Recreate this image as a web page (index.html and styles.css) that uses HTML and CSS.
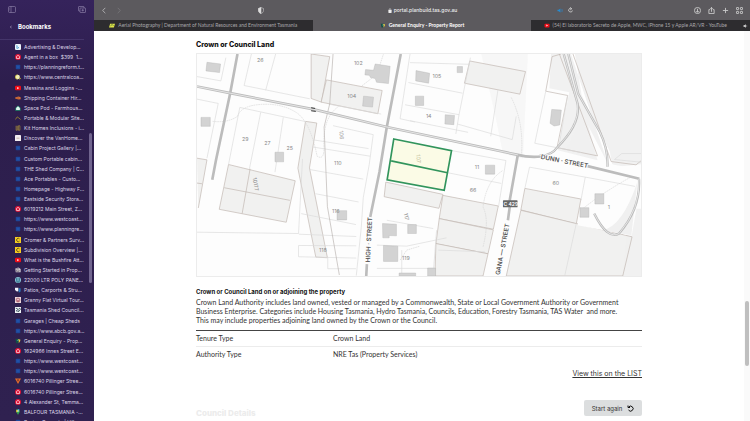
FILE: index.html
```html
<!DOCTYPE html>
<html lang="en">
<head>
<meta charset="utf-8">
<title>General Enquiry - Property Report</title>
<link rel="stylesheet" href="styles.css">
</head>
<body>
<svg width="0" height="0" class="defs" aria-hidden="true">
  <symbol id="cube" viewBox="0 0 16 16"><rect x="2" y="2" width="12" height="12" rx="2" fill="#1d4596"/><path d="M4 6h8M4 10h8" stroke="#2c62bd" stroke-width="1.5"/></symbol>
  <symbol id="red" viewBox="0 0 16 16"><circle cx="8" cy="8" r="8" fill="#e01438"/><path d="M8 3.5l4 3v5.5H4V6.500z" fill="none" stroke="#ffd9e0" stroke-width="2"/></symbol>
  <symbol id="yt" viewBox="0 0 16 16"><rect y="2" width="16" height="12" rx="3" fill="#f00d18"/><path d="M6 5l5 3-5 3z" fill="#fff"/></symbol>
  <symbol id="adv" viewBox="0 0 16 16"><rect width="16" height="16" rx="3" fill="#eef6fc"/><path d="M5 3v9l5-2-3-3" fill="none" stroke="#3a94cf" stroke-width="2"/></symbol>
  <symbol id="coast" viewBox="0 0 16 16"><circle cx="7" cy="8" r="6" fill="#f2efb8"/><path d="M7 2a6 6 0 0 0 0 12M12 9l3 3-4 2" fill="none" stroke="#d8c83c" stroke-width="2"/></symbol>
  <symbol id="ship" viewBox="0 0 16 16"><path d="M1 6l9-2 5 2v5l-5 1-9-2z" fill="#d5703a"/><path d="M3 8h8" stroke="#70321f"/></symbol>
  <symbol id="pod" viewBox="0 0 16 16"><path d="M8 1l7 7v7H1V8z" fill="#1e8b68"/><path d="M8 3l5 5v5H3V8z" fill="#dff4ee"/></symbol>
  <symbol id="roof" viewBox="0 0 16 16"><path d="M1 12l5-7 3 2 6 5" fill="none" stroke="#a58d2d" stroke-width="2"/></symbol>
  <symbol id="kit" viewBox="0 0 16 16"><path d="M3 2v12h3V2M9 2h4v12H9z" fill="none" stroke="#a18a3b" stroke-width="2"/></symbol>
  <symbol id="van" viewBox="0 0 16 16"><rect width="16" height="16" rx="1" fill="#f3edf0"/><path d="M4 7h8v3H4z" fill="#c9b8ad"/></symbol>
  <symbol id="c" viewBox="0 0 16 16"><rect width="16" height="16" fill="#f5cd22"/><path d="M12 5a4.500 4.500 0 1 0 0 6" fill="none" stroke="#423719" stroke-width="2"/></symbol>
  <symbol id="prop" viewBox="0 0 16 16"><path d="M1 4l8-3 6 4v9H2z" fill="#d9d4dc"/><path d="M4 8h7v4H4zM3 5l8-2" fill="none" stroke="#5d5562" stroke-width="1.500"/></symbol>
  <symbol id="poly" viewBox="0 0 16 16"><circle cx="8" cy="8" r="8" fill="#8cc7d8"/><path d="M4 3v7a4 4 0 0 0 8 0V3M8 2v12" fill="none" stroke="#286780" stroke-width="2"/></symbol>
  <symbol id="patio" viewBox="0 0 16 16"><path d="M0 2h9v9l-4 1-5-4z" fill="#f4f4fb"/><path d="M10 3h5v9l-5 3z" fill="#2676ba"/></symbol>
  <symbol id="granny" viewBox="0 0 16 16"><rect width="16" height="16" fill="#ecd7da"/><circle cx="8" cy="8" r="5" fill="none" stroke="#a64d5d" stroke-width="2"/><path d="M5 12l3-6 3 6" fill="#a64d5d"/></symbol>
  <symbol id="council" viewBox="0 0 16 16"><rect width="16" height="16" fill="#eef3f4"/><path d="M2 3l5 2 2 8 5-6-1-4-4 3M3 8l3 5" fill="none" stroke="#243d4d" stroke-width="2"/></symbol>
  <symbol id="enq" viewBox="0 0 16 16"><path d="M1 2h8v12H3z" fill="#124e48"/><path d="M7 3l7 1v4l-4 6V7z" fill="#efd33c"/><path d="M4 7l5-3v4z" fill="#3aa8a0"/></symbol>
  <symbol id="vee" viewBox="0 0 16 16"><path d="M0 1h16L8 16z" fill="#e56e2c"/><path d="M5 4h6l-3 6z" fill="#6a2c2f"/></symbol>
  <symbol id="pin" viewBox="0 0 16 16"><path d="M8 0a5 5 0 0 1 5 5c0 4-4 6-5 11C7 11 3 9 3 5a5 5 0 0 1 5-5z" fill="#34a853"/><path d="M8 0a5 5 0 0 1 4 2L8 6z" fill="#4285f4"/><path d="M3 5a5 5 0 0 1 2-4l3 4-4 4z" fill="#f4c020"/><circle cx="8" cy="5" r="2" fill="#fff"/></symbol>
</svg>
<div class="window">
  <aside class="sidebar">
    <div class="side-tools">
      <button class="icon-btn" aria-label="Hide sidebar"><svg viewBox="0 0 16 14" class="ico-side"><rect x="1" y="1" width="14" height="12" rx="2"/><path d="M6 1v12M3 4h1M3 6h1M3 8h1"/></svg></button>
      <button class="icon-btn" aria-label="New tab group"><svg viewBox="0 0 16 14" class="ico-side"><path d="M4 10H2a1 1 0 0 1-1-1V2a1 1 0 0 1 1-1h9a1 1 0 0 1 1 1v2"/><rect x="4" y="4" width="11" height="9" rx="1"/><path d="M9.500 6v5M7 8.500h5"/></svg></button>
    </div>
    <div class="side-head">
      <button class="icon-btn" aria-label="Back to sidebar"><svg viewBox="0 0 6 10" class="ico-chev"><path d="M5 1L1 5l4 4"/></svg></button>
      <h1>Bookmarks</h1>
    </div>
    <nav class="bookmarks" aria-label="Bookmarks">
      <a href="#"><svg><use href="#adv"/></svg>Advertising &amp; Develop...</a>
      <a href="#"><svg><use href="#red"/></svg>Agent in a box&nbsp; $399&nbsp; 1...</a>
      <a href="#"><svg><use href="#cube"/></svg>https://planningreform.t...</a>
      <a href="#"><svg><use href="#coast"/></svg>https://www.centralcoa...</a>
      <a href="#"><svg><use href="#yt"/></svg>Messina and Loggins -...</a>
      <a href="#"><svg><use href="#ship"/></svg>Shipping Container Hir...</a>
      <a href="#"><svg><use href="#pod"/></svg>Space Pod - Farmhous...</a>
      <a href="#"><svg><use href="#roof"/></svg>Portable &amp; Modular Site...</a>
      <a href="#"><svg><use href="#kit"/></svg>Kit Homes Inclusions - i...</a>
      <a href="#"><svg><use href="#van"/></svg>Discover the VanHome...</a>
      <a href="#"><svg><use href="#cube"/></svg>Cabin Project Gallery |...</a>
      <a href="#"><svg><use href="#cube"/></svg>Custom Portable cabin...</a>
      <a href="#"><svg><use href="#cube"/></svg>THE Shed Company | C...</a>
      <a href="#"><svg><use href="#cube"/></svg>Ace Portables - Custo...</a>
      <a href="#"><svg><use href="#cube"/></svg>Homepage - Highway F...</a>
      <a href="#"><svg><use href="#cube"/></svg>Eastside Security Stora...</a>
      <a href="#"><svg><use href="#red"/></svg>6019212 Main Street, Z...</a>
      <a href="#"><svg><use href="#cube"/></svg>https://www.westcoast...</a>
      <a href="#"><svg><use href="#cube"/></svg>https://www.planningre...</a>
      <a href="#"><svg><use href="#c"/></svg>Cromer &amp; Partners Surv...</a>
      <a href="#"><svg><use href="#c"/></svg>Subdivision Overview |...</a>
      <a href="#"><svg><use href="#yt"/></svg>What is the Bushfire Att...</a>
      <a href="#"><svg><use href="#prop"/></svg>Getting Started in Prop...</a>
      <a href="#"><svg><use href="#poly"/></svg>22000 LTR POLY PANE...</a>
      <a href="#"><svg><use href="#patio"/></svg>Patios, Carports &amp; Stru...</a>
      <a href="#"><svg><use href="#granny"/></svg>Granny Flat Virtual Tour...</a>
      <a href="#"><svg><use href="#council"/></svg>Tasmania Shed Council...</a>
      <a href="#"><svg><use href="#cube"/></svg>Garages | Cheap Sheds</a>
      <a href="#"><svg><use href="#cube"/></svg>https://www.abcb.gov.a...</a>
      <a href="#"><svg><use href="#enq"/></svg>General Enquiry - Prop...</a>
      <a href="#"><svg><use href="#red"/></svg>1624966 Innes Street E...</a>
      <a href="#"><svg><use href="#cube"/></svg>https://www.westcoast...</a>
      <a href="#"><svg><use href="#cube"/></svg>https://www.westcoast...</a>
      <a href="#"><svg><use href="#vee"/></svg>6016740 Pillinger Stree...</a>
      <a href="#"><svg><use href="#red"/></svg>6016740 Pillinger Stree...</a>
      <a href="#"><svg><use href="#red"/></svg>4 Alexander St, Temma...</a>
      <a href="#"><svg><use href="#pin"/></svg>BALFOUR TASMANIA -...</a>
      <a href="#"><svg><use href="#cube"/></svg>Review Property | Vill...</a>
    </nav>
    <div class="side-thumb"></div>
  </aside>

  <div class="browser">
    <header class="toolbar">
      <div class="group nav-group">
        <button class="icon-btn" aria-label="Back"><svg viewBox="0 0 6 10" class="ico-nav"><path d="M5 1L1 5l4 4"/></svg></button>
        <button class="icon-btn dim" aria-label="Forward"><svg viewBox="0 0 6 10" class="ico-nav"><path d="M1 1l4 4-4 4"/></svg></button>
      </div>
      <button class="icon-btn" aria-label="Privacy report"><svg viewBox="0 0 12 14" class="ico-shield"><path d="M6 1l5 2v4c0 3-2 5-5 6-3-1-5-3-5-6V3z"/><path d="M6 1v12C3 12 1 10 1 7V3z" class="solid"/></svg></button>
      <div class="address">
        <svg viewBox="0 0 10 12" class="ico-lock"><rect x="1" y="5" width="8" height="7" rx="1"/><path d="M3 6V3.500a2 2 0 0 1 4 0V6" fill="none" stroke="#eee" stroke-width="1.500"/></svg>
        <span>portal.planbuild.tas.gov.au</span>
      </div>
      <div class="group media-group">
        <button class="icon-btn" aria-label="Mute"><svg viewBox="0 0 14 12" class="ico-blue"><path d="M1 4h3l4-3v10L4 8H1z"/><path d="M10 3q2 3 0 6M12 2q2 4 0 8" fill="none" stroke="#278bd0"/></svg></button>
        <button class="icon-btn" aria-label="Reload"><svg viewBox="0 0 12 14" class="ico-line small"><path d="M9 4a4.500 4.500 0 1 0 1.500 4M5 1l4 3-4 3"/></svg></button>
      </div>
      <div class="group actions">
        <button class="icon-btn" aria-label="Downloads"><svg viewBox="0 0 16 16" class="ico-line"><circle cx="8" cy="8" r="7"/><path d="M8 4v8M5 9l3 3 3-3"/></svg></button>
        <button class="icon-btn" aria-label="Share"><svg viewBox="0 0 16 16" class="ico-line"><path d="M5 6H2v9h12V6h-3M8 11V1M5 4l3-3 3 3"/></svg></button>
        <button class="icon-btn" aria-label="New tab"><svg viewBox="0 0 16 16" class="ico-line"><path d="M8 2v12M2 8h12"/></svg></button>
        <button class="icon-btn" aria-label="Tab overview"><svg viewBox="0 0 16 16" class="ico-line"><rect x="1" y="1" width="5" height="5" rx="1"/><rect x="10" y="1" width="5" height="5" rx="1"/><rect x="1" y="10" width="5" height="5" rx="1"/><rect x="10" y="10" width="5" height="5" rx="1"/></svg></button>
      </div>
    </header>
    <nav class="tabs" aria-label="Tabs">
      <a href="#" class="tab"><svg viewBox="0 0 16 12"><path d="M3 1h13l-3 10H0z" fill="#dde34a"/><path d="M4 8l4-5 4 4" fill="none" stroke="#56782d" stroke-width="2"/></svg><span>Aerial Photography | Department of Natural Resources and Environment Tasmania</span></a>
      <a href="#" class="tab active" aria-current="page"><svg><use href="#enq"/></svg><span>General Enquiry - Property Report</span></a>
      <a href="#" class="tab video"><svg><use href="#yt"/></svg><span>(54) El laboratorio Secreto de Apple, MWC, iPhone 15 y Apple AR/VR - YouTube</span><svg viewBox="0 0 14 12" class="sound"><path d="M1 4h3l4-3v10L4 8H1z" fill="#ddd"/><path d="M10 3q2 3 0 6" fill="none" stroke="#ddd"/></svg></a>
    </nav>

    <div class="page">
      <main class="report">
        <h2>Crown or Council Land</h2>
        <svg class="map" viewBox="18 9 1338 669" role="img" aria-label="Map of crown and council land near Dunn Street">
          <rect x="18" y="9" width="1338" height="669" fill="#fdfdfd"/>
          <g class="shade">
            <path d="M940 9h440v330l-95 10-32-15-170-330z"/>
            <path d="M1085 9h55l85 320-120-30 35-175-60-12z"/>
            <path d="M955 9h60l-15 315-60-15-20-100-45-200z" opacity=".5"/>
            <path d="M1320 475h40v203h-60z"/>
          </g>
          <path d="M1145 9l60 180 55 160 10-1-8-45-85-170-20-124z" fill="#fff"/>
          <path d="M1125 60l40 110 0 50-25 60-15 20 95 20z" fill="#f0f0f0"/>
          <g class="crown">
            <path d="M362 9l56 8-25 137-31-11z"/>
            <path d="M408 87l168 32-13 70-171-35z"/>
            <path d="M345 212l34 5-22 135 54 271-35-2-54-268z"/>
            <path d="M113 342l201 49-27 125-202-39z"/>
            <path d="M178 355l-24 135M100 412l198 38"/>
            <path d="M18 323l30 5-26 145M18 398l15 2"/>
            <path d="M840 30l168 32-17 68-167-33z"/>
            <path d="M587 395l172 37-12 42-165-35z"/>
            <path d="M759 435l167 32-15 70-163-32z"/>
            <path d="M748 505l163 34-16 72-157-30z"/>
            <path d="M738 580l157 31-15 67H735z"/>
            <path d="M1006 414l169 32-14 75-167-42z"/>
            <path d="M994 480l335 80-28 118H950z"/>
            <path d="M1115 9l-27 8-19 104 66 13-32 157 122 25L1110 9M1151 9l115 324 75 10 15-12" fill="none"/>
          </g>
          <path d="M1179 450l-14 75 163 32 28-160v-40l-170-30z" fill="#fdfdfd"/>
          <path d="M1240 540q60-10 105-145l-18 160z" fill="#f0f0f0"/>
          <g class="parcel">
            <path d="M18 77l72 13 15-70M18 145l64 13-34 165M160 104l198 40M160 104l22-95M225 118l30-109M415 160l158 30"/>
            <path d="M147 170l200 43M147 170l-34 172M210 185l-34 170M278 200l-25 165M428 225l121 27-12 90-18 100-6 90-15 145M370 268l165 26M365 289l175 28M357 357l162 29M375 430l130 25M332 490l165 33M325 552l173 7M18 546l306 4 12-225M324 586l174 1M324 586v34l174 4M412 620v36h85"/>
            <path d="M660 9l-30 195 45 10M660 35l180 5M655 95l163 32M645 162l163 30M660 210l175 35M842 20l-34 170-10 60M803 220l165 47 12-70M925 117l-22 140M1069 121l-33 157 140 28M1135 134l-25 145"/>
            <path d="M785 300l164 30-22 137M775 367l160 32M1020 350l168 30-13 70M1020 350l-14 64M1188 380l150 28M1356 335l-80-8 22-18h58M590 510l140 25M560 585l90 3 120-25M635 600v75M560 655h170M740 540l-10 130M1161 520l-35 158M745 600l140 5"/>
          </g>
          <g class="contour">
            <path d="M65 212q45 5 75-15 10-30 60-35 70-8 120 25 40 30 60 130 25 15 20-40 0-80 45-110M515 105l45-35 20-61M965 140q40 80 30 180M880 590q20-80 0-120 10-80 60-110M1175 480q60-50 150-100M630 630l20-30 40-12"/>
          </g>
          <path d="M428 9l-10 150-17 70 10 240 36 206" class="creek"/>
          <g class="building">
            <path d="M48 34l41 5-3 26-41-5zM30 200h28v27H30zM253 305h26v29h-26zM555 39l45 7-5 52-36-4-4-11-14-3-4-7-13-1 2-16 24 2zM520 136l30 3-3 30-30-3zM678 59l41 8-3 30-39-7zM676 136h25v28h-25zM766 192l28 2-2 28-27-2zM802 47h16v18h-16zM1087 176l29 2-5 45-17 3-12-8zM887 344h28v27h-28zM1217 430h27v31h-27zM1172 472h27v29h-27zM440 481h29v28h-29zM577 520l42 2v35l-22-1v7h-19zM580 586l43 2v46h-43zM653 523h26v27h-26zM713 654h24v24h-24zM627 669h50v9h-50z"/>
          </g>
          <g class="road">
            <path d="M18 107l100 20 252 49 220 53 395 84q30 8 70 5M1195 347l156 38"/>
            <path d="M140 9l-22 118-43 203-11 58M632 9l-42 220-22 135-28 136M530 642l-2 36M985 312l-25 140M955 510l6-45"/>
          </g>
          <g class="lane">
            <path d="M1123 9l42 150q10 60-60 130-20 28-55 26M1137 9l30 120 65 115q25 50 23 105M1350 385q5 90-60 165-35 20-75-60"/>
          </g>
          <g class="lane-core">
            <path d="M1123 9l42 150q10 60-60 130-20 28-55 26M1137 9l30 120 65 115q25 50 23 105M1350 385q5 90-60 165-35 20-75-60M18 107l100 20 252 49 220 53 395 84"/>
          </g>
          <path d="M611 265l174 35-22 120-172-32z" fill="#fbfbe6" stroke="#31945c" stroke-width="5"/>
          <path d="M603 331l170 36" stroke="#31945c" stroke-width="5"/>
          <path d="M362 171l12 2M362 180l14 2" stroke="#333" stroke-width="3"/>
          <g class="num">
            <text x="199" y="33">26</text><text x="491" y="42">102</text><text x="471" y="142">104</text><text x="154" y="271">29</text><text x="221" y="283">27</text><text x="288" y="297">25</text><text x="431" y="344">110</text><text x="425" y="487">116</text><text x="386" y="607">118</text><text x="728" y="80">105</text><text x="708" y="202">14</text><text x="855" y="357">11</text><text x="840" y="424">66</text><text x="1089" y="404">60</text><text x="1256" y="476">1</text><text x="636" y="629">119</text>
            <text transform="translate(447 240) rotate(85)">106</text><text transform="translate(186 382) rotate(80)">10177</text><text transform="translate(641 490) rotate(75)">117</text><text transform="translate(679 312) rotate(85)" class="gold">107</text>
          </g>
          <g class="street">
            <text transform="translate(1053 325) rotate(11)">DUNN · STREET</text>
            <text transform="translate(539 637) rotate(-87)">HIGH · STREET</text>
            <text transform="translate(930 676) rotate(-79)">GANA — STREET</text>
          </g>
          <rect x="940" y="450" width="44" height="21" rx="2" fill="#666"/>
          <text x="942" y="466" class="route">C 429</text>
        </svg>
        <h3>Crown or Council Land on or adjoining the property</h3>
        <p>Crown Land Authority includes land owned, vested or managed by a Commonwealth, State or Local Government Authority or Government<br>Business Enterprise. Categories include Housing Tasmania, Hydro Tasmania, Councils, Education, Forestry Tasmania, TAS Water&nbsp; and more.<br>This may include properties adjoining land owned by the Crown or the Council.</p>
        <table>
          <tbody>
            <tr><th scope="row">Tenure Type</th><td>Crown Land</td></tr>
            <tr><th scope="row">Authority Type</th><td>NRE Tas (Property Services)</td></tr>
          </tbody>
        </table>
        <a href="#" class="list-link">View this on the LIST</a>
        <div class="next">
          <h2 class="faded">Council Details</h2>
          <button class="restart">Start again <svg viewBox="0 0 14 14"><path d="M2 1v4h4M3 4.500A5 5 0 1 1 3 10"/></svg></button>
        </div>
      </main>
      <div class="scrollbar"><div class="thumb"></div></div>
    </div>
  </div>
</div>
</body>
</html>
```

FILE: styles.css
```css
* { box-sizing: border-box; }
body { margin: 0; font-family: Inter, "Liberation Sans", sans-serif; background: #fff; }
h1, h2, h3, p { margin: 0; }
a { color: inherit; text-decoration: none; }
svg { display: block; flex: none; }
.defs { position: absolute; }
.icon-btn { display: flex; padding: 0; border: 0; background: none; color: inherit; }
.window { display: flex; height: 100vh; overflow: hidden; }

.sidebar { position: relative; flex: none; width: 94px; display: flex; flex-direction: column; background: linear-gradient(#35235b, #2d1e4d 20%, #2f2150); color: #ddd6e8; }
.side-tools { display: flex; justify-content: space-between; padding: 6px 8px 0; height: 20px; }
.ico-side { width: 8px; height: 7px; fill: none; stroke: #a99fc0; stroke-width: 1; }
.side-head { display: flex; align-items: center; gap: 6px; height: 13px; padding-left: 10px; }
.ico-chev { width: 2px; height: 4px; fill: none; stroke: #b5abc9; stroke-width: 2; }
.side-head h1 { font-size: 6px; line-height: 8px; color: #fff; }
.bookmarks { flex: 1; display: grid; grid-auto-rows: 1fr; margin: 6px 10px -6px 0; padding-top: 2px; border-top: 1px solid #44356a; }
.bookmarks a { display: flex; align-items: center; gap: 3px; padding-left: 15px; min-height: 0; font-size: 5px; line-height: 6px; white-space: nowrap; }
.bookmarks svg { width: 6px; height: 6px; }
.side-thumb { position: absolute; right: 2px; top: 133px; width: 3px; height: 150px; border-radius: 2px; background: #71658f; }

.browser { flex: 1; min-width: 0; display: flex; flex-direction: column; }
.toolbar { flex: none; display: flex; align-items: center; height: 20px; padding: 0 7px 0 8px; background: #5c5a5e; color: #eee; }
.group { display: flex; align-items: center; }
.nav-group { gap: 11px; width: 156px; }
.ico-nav { width: 4px; height: 7px; fill: none; stroke: #d5d4d6; stroke-width: 1; }
.dim { opacity: .3; }
.ico-shield { width: 6px; height: 7px; fill: none; stroke: #ddd; stroke-width: 1; }
.ico-shield .solid { fill: #ddd; }
.address { display: flex; align-items: center; justify-content: center; gap: 2px; flex: 1; padding-left: 24px; font-size: 5px; line-height: 8px; font-weight: 500; }
.ico-lock { width: 4px; height: 5px; fill: #eee; }
.media-group { gap: 5px; margin-right: 121px; }
.ico-blue { width: 6px; height: 5px; fill: #278bd0; }
.ico-line { width: 7px; height: 7px; fill: none; stroke: #ccc; stroke-width: 2; }
.ico-line.small { width: 5px; height: 6px; }
.actions { gap: 7px; }
.tabs { flex: none; display: grid; grid-template-columns: repeat(3, 1fr); height: 11px; }
.tab { display: flex; align-items: center; justify-content: center; gap: 3px; min-width: 0; background: #2d2c2f; color: #a9a8ab; font: 5px/7px Lato, sans-serif; white-space: nowrap; overflow: hidden; }
.tab svg { width: 6px; height: 5px; }
.tab.active { background: #5c5a5e; color: #fff; font-weight: 700; }
.tab.video { justify-content: flex-end; padding-right: 2px; }
.tab .sound { width: 5px; height: 4px; margin-left: 13px; }

.page { flex: 1; min-height: 0; display: flex; }
.report { flex: 1; min-width: 0; padding: 9px 102px 0; color: #333; font: 7px/9px Lato, sans-serif; }
.report h2 { font: 800 7px/10px Inter, sans-serif; color: #111; }
.map { width: 100%; height: auto; margin-top: 3px; border: 1px solid #ececec; }
.report h3 { margin-top: 10px; font: 700 6px/9px Inter, sans-serif; color: #111; }
.report p { margin-top: 2px; white-space: nowrap; }
table { width: 100%; margin-top: 5px; border-collapse: collapse; border-top: 1px solid #444; }
th, td { padding: 3px 0; text-align: left; font-weight: 400; border-bottom: 1px solid #ececec; }
tr:last-child > * { border-bottom: 0; }
th { width: 137px; }
.list-link { display: block; width: fit-content; margin: 7px 0 0 auto; font: 7px/10px Inter, sans-serif; text-decoration: underline; }
.next { display: flex; justify-content: space-between; margin-top: 21px; }
.report .faded { margin-top: 8px; color: #ececec; font-size: 8px; }
.restart { display: flex; align-items: center; justify-content: center; gap: 5px; width: 58px; height: 16px; padding: 0; border: 0; border-radius: 2px; background: #dcdedf; color: #333; font: 6px/9px Inter, sans-serif; }
.restart svg { width: 7px; height: 7px; fill: none; stroke: #111; stroke-width: 2; }
.scrollbar { flex: none; width: 6px; padding: 270px 1px 0; background: #fafafa; }
.thumb { height: 65px; border-radius: 2px; background: #bfbfbf; }

.map text { font-family: Inter, sans-serif; }
.shade { fill: #f1f1f1; }
.crown { fill: #f0efee; fill-opacity: .9; stroke: #c0b4ae; stroke-width: 2; }
.parcel { fill: none; stroke: #dadada; stroke-width: 2; }
.contour { fill: none; stroke: #d6d6d6; stroke-width: 2; stroke-dasharray: 5 2; }
.creek { fill: none; stroke: #b8b2ae; stroke-width: 2; }
.building { fill: #d3d3d3; stroke: #aaa; stroke-width: 1; }
.road { fill: none; stroke: #bcbcbc; stroke-width: 8; }
.lane { fill: none; stroke: #bbb; stroke-width: 7; }
.lane-core { fill: none; stroke: #e6e6e6; stroke-width: 3; }
.num { fill: #888; font-size: 16px; }
.num .gold { fill: #b5b48c; }
.street { fill: #555; font-size: 19px; font-weight: 600; stroke: #fff; stroke-width: 4; paint-order: stroke; }
.route { fill: #fff; font-size: 15px; font-weight: 600; }
```
